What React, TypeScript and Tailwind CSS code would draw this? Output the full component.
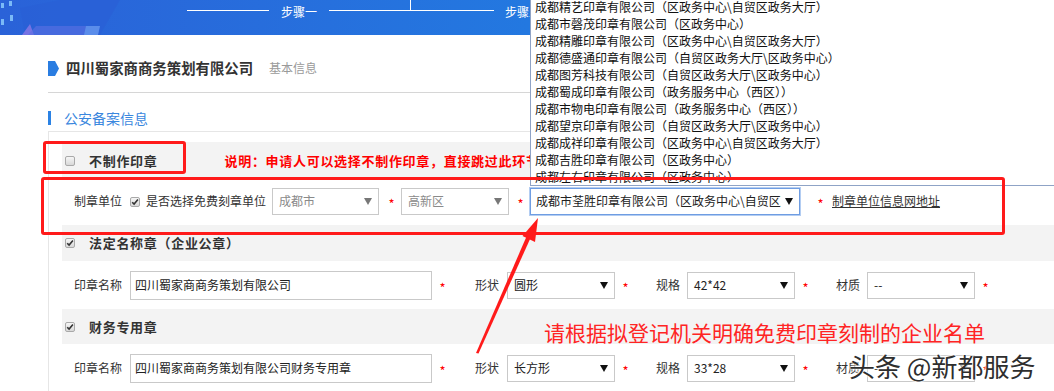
import React from "react";

const listItems = [
  "成都精艺印章有限公司（区政务中心\\自贸区政务大厅）",
  "成都市磬茂印章有限公司（区政务中心）",
  "成都精雕印章有限公司（区政务中心\\自贸区政务大厅）",
  "成都德盛通印章有限公司（自贸区政务大厅\\区政务中心）",
  "成都图芳科技有限公司（自贸区政务大厅\\区政务中心）",
  "成都蜀成印章有限公司（政务服务中心（西区））",
  "成都市物电印章有限公司（政务服务中心（西区））",
  "成都望京印章有限公司（自贸区政务大厅\\区政务中心）",
  "成都成祥印章有限公司（区政务中心\\自贸区政务大厅）",
  "成都吉胜印章有限公司（区政务中心）",
  "成都左右印章有限公司（区政务中心）",
];

function Checkbox({ checked }: { checked?: boolean }) {
  return (
    <span className="inline-flex h-[10px] w-[10px] shrink-0 items-center justify-center rounded-[2px] border border-[#a9a9a9] bg-linear-to-b from-[#f6f6f6] to-[#d8d8d8]">
      {checked && (
        <svg width="8" height="8" viewBox="0 0 8 8">
          <path d="M1.2 4.2 L3.1 6.1 L6.9 1.6" stroke="#333" strokeWidth="1.6" fill="none" />
        </svg>
      )}
    </span>
  );
}

function Arrow({ grey }: { grey?: boolean }) {
  return (
    <svg width="8" height="7" viewBox="0 0 8 7" className="shrink-0">
      <polygon points="0,0 8,0 4,7" fill={grey ? "#777" : "#111"} />
    </svg>
  );
}

function Select({ value, w, disabled }: { value: string; w: string; disabled?: boolean }) {
  return (
    <div
      className={
        "flex h-[27px] shrink-0 items-center justify-between border border-[#c9c9c9] bg-white pl-[6px] pr-[6px] " + w
      }
    >
      <span className={disabled ? "text-[12px] text-[#8a8a8a]" : "text-[12px] text-[#222]"}>{value}</span>
      <Arrow grey={disabled} />
    </div>
  );
}

function Star({ className }: { className?: string }) {
  return (
    <span
      className={
        "inline-block w-[7px] shrink-0 translate-y-[2px] text-center text-[13px] leading-[13px] text-[#f00] " +
        (className ?? "")
      }
    >
      *
    </span>
  );
}

function SealRow({ name, shape, size }: { name: string; shape: string; size: string }) {
  return (
    <div className="flex h-[48px] items-center bg-white pl-[12px] text-[12px] text-[#333]">
      <span className="w-[48px] shrink-0">印章名称</span>
      <div className="ml-[8px] flex h-[29px] w-[302px] shrink-0 items-center border border-[#c9c9c9] bg-white pl-[4px] text-[12px] text-[#222]">
        {name}
      </div>
      <Star className="ml-[7px]" />
      <span className="ml-[29px] w-[24px] shrink-0">形状</span>
      <div className="ml-[8px]">
        <Select value={shape} w="w-[108px]" />
      </div>
      <Star className="ml-[7px]" />
      <span className="ml-[27px] w-[24px] shrink-0">规格</span>
      <div className="ml-[7px]">
        <Select value={size} w="w-[108px]" />
      </div>
      <Star className="ml-[7px]" />
      <span className="ml-[27px] w-[24px] shrink-0">材质</span>
      <div className="ml-[7px]">
        <Select value="--" w="w-[108px]" />
      </div>
      <Star className="ml-[7px]" />
    </div>
  );
}

function GreyHeader({ label, checked, h }: { label: string; checked?: boolean; h: string }) {
  return (
    <div className={"flex items-center bg-[#f3f3f3] pl-[3px] " + h}>
      <Checkbox checked={checked} />
      <span className="ml-[14px] text-[13px] font-bold tracking-[0.7px] text-[#333]">{label}</span>
    </div>
  );
}

export default function App() {
  return (
    <div className="relative h-[391px] w-[1054px] overflow-hidden bg-white font-['Noto_Sans_CJK_SC',sans-serif]">
      {/* banner */}
      <div className="relative h-[35px] overflow-hidden bg-linear-to-r from-[#2a62d8] via-[#2378e0] to-[#2379e0]">
        <svg className="absolute left-0 top-0" width="140" height="35" viewBox="0 0 140 35">
          <polygon points="20,8 60,0 120,0 100,35 25,35" fill="#2a5fd6" opacity="0.7" />
          <polygon points="22,35 30,24 34,35" fill="#8a78e6" opacity="0.8" />
          <polygon points="28,35 36,26 100,26 98,35" fill="#5b6fe2" opacity="0.6" />
          <rect x="1" y="3" width="3" height="5" fill="#8fd0ff" opacity="0.8" />
          <rect x="9" y="1" width="3" height="5" fill="#8fd0ff" opacity="0.8" />
          <rect x="1" y="19" width="3" height="6" fill="#8fd0ff" opacity="0.8" />
          <rect x="10" y="15" width="3" height="6" fill="#8fd0ff" opacity="0.8" />
          <polygon points="86,26 100,26 98,35 84,35" fill="#6fb0f5" opacity="0.5" />
        </svg>
        <div className="relative flex items-start pl-[187px] text-white">
          <div className="h-[11px] w-[82px] border-b border-white" />
          <span className="ml-[12px] mt-[6px] text-[12px] leading-[12px]">步骤一</span>
          <div className="ml-[12px] h-[11px] w-[82px] border-b border-r border-white" />
          <div className="h-[11px] w-[83px] border-b border-white" />
          <span className="ml-[11px] mt-[6px] text-[12px] leading-[12px]">步骤二</span>
        </div>
      </div>

      {/* body */}
      <div className="pl-[48px]">
        <div className="mt-[25px] flex h-[16px] items-center">
          <svg width="11" height="15" viewBox="0 0 11 15">
            <polygon points="0,0 7,0 11,7.5 7,15 0,15" fill="#2a7de1" />
          </svg>
          <span className="ml-[7px] text-[14.4px] font-bold leading-[16px] text-[#333]">四川蜀家商商务策划有限公司</span>
          <span className="ml-[16px] text-[12px] leading-[16px] text-[#9a9a9a]">基本信息</span>
        </div>
        <div className="mt-[16px] h-px bg-[#d6d6d6]" />
        <div className="mt-[18px] flex h-[14px] items-center">
          <div className="h-[14px] w-[3px] bg-[#2b82e4]" />
          <span className="ml-[13px] text-[14px] leading-[14px] text-[#3a87de]">公安备案信息</span>
        </div>

        {/* panel */}
        <div className="mt-[6px] border-l border-t border-[#e6e6e6] pl-[13px] pt-[10px]">
          <div className="flex h-[35px] items-center bg-[#f3f3f3] pl-[3px] pt-[2px]">
            <Checkbox />
            <span className="ml-[14px] text-[13px] font-bold tracking-[0.7px] text-[#333]">不制作印章</span>
            <span className="ml-[67px] whitespace-nowrap text-[13px] font-bold tracking-[0.7px] text-[#f00]">
              说明：申请人可以选择不制作印章，直接跳过此环节
            </span>
          </div>

          <div className="flex h-[48px] items-center bg-white pl-[12px] text-[12px] text-[#333]">
            <span className="w-[48px] shrink-0">制章单位</span>
            <span className="ml-[8px]">
              <Checkbox checked />
            </span>
            <span className="ml-[6px] w-[120px] shrink-0">是否选择免费刻章单位</span>
            <div className="ml-[6px]">
              <Select value="成都市" w="w-[107px]" disabled />
            </div>
            <Star className="ml-[9px]" />
            <div className="ml-[6px]">
              <Select value="高新区" w="w-[108px]" disabled />
            </div>
            <Star className="ml-[8px]" />
            <div className="ml-[6px] flex h-[27px] w-[270px] shrink-0 items-center justify-between border border-[#6f9de2] bg-white pl-[5px] pr-[6px] shadow-[0_0_0_1px_#b3cdf2]">
              <span className="overflow-hidden whitespace-nowrap text-[12px] text-[#222]">
                成都市荃胜印章有限公司（区政务中心\自贸区政务大厅）
              </span>
              <span className="ml-[4px]">
                <Arrow />
              </span>
            </div>
            <Star className="ml-[17px]" />
            <a className="ml-[8px] text-[12px] text-[#333] underline">制章单位信息网地址</a>
          </div>

          <GreyHeader label="法定名称章（企业公章）" checked h="h-[36px]" />
          <SealRow name="四川蜀家商商务策划有限公司" shape="圆形" size="42*42" />
          <GreyHeader label="财务专用章" checked h="h-[35px]" />
          <SealRow name="四川蜀家商商务策划有限公司财务专用章" shape="长方形" size="33*28" />
        </div>
      </div>

      {/* open dropdown list */}
      <div className="absolute left-[530px] top-[-2px] w-[540px] border-b border-l border-[#8fa3c6] bg-white">
        {listItems.map((t) => (
          <div key={t} className="h-[17px] whitespace-nowrap pl-[4px] text-[12px] leading-[17px] text-[#111]">
            {t}
          </div>
        ))}
      </div>

      {/* annotations */}
      <div className="absolute left-[43px] top-[141px] h-[33px] w-[143px] rounded-[3px] border-[3px] border-[#ff1a1a]" />
      <div className="absolute left-[41px] top-[177px] h-[58px] w-[964px] rounded-[3px] border-[3px] border-[#ff1a1a]" />
      <svg className="pointer-events-none absolute left-0 top-0" width="1054" height="391" viewBox="0 0 1054 391">
        <polygon points="476,353 478.5,353.5 530.5,238 526.5,236.5" fill="#ff1a1a" />
        <polygon points="538,218 535,242 522.5,236" fill="#ff1a1a" />
      </svg>
      <div className="absolute left-[544px] top-[320px] whitespace-nowrap text-[21px] leading-[24px] text-[#ff2424]">
        请根据拟登记机关明确免费印章刻制的企业名单
      </div>
      <div className="absolute left-[849px] top-[351px] whitespace-nowrap text-[26px] leading-[30px] text-[#2e2e2e] [text-shadow:0_0_2px_#fff,0_0_2px_#fff,0_0_3px_#fff]">
        头条 @新都服务
      </div>
    </div>
  );
}
